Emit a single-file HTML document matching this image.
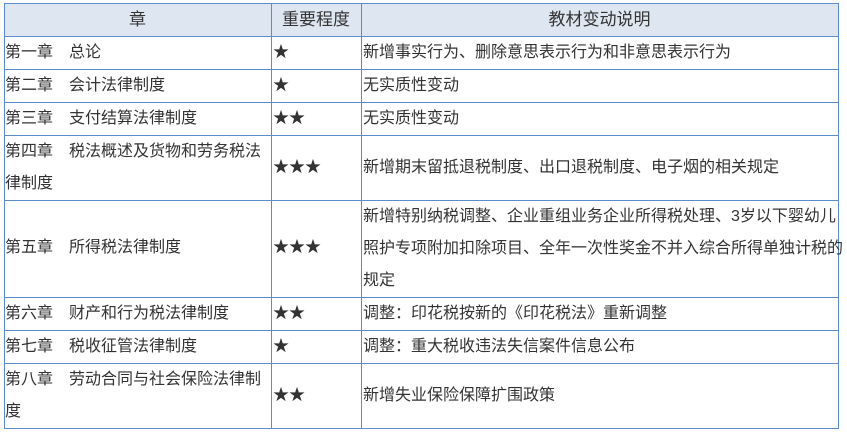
<!DOCTYPE html>
<html><head><meta charset="utf-8"><style>
body{margin:0;width:847px;height:432px;background:#fff;overflow:hidden;font-family:"Liberation Sans","Noto Sans CJK SC",sans-serif;color:#333;font-size:16px}
.h{position:absolute;background:#5b8ccb;height:1px}
.v{position:absolute;background:#5b8ccb;width:1px;top:3px;height:426px}
.t{position:absolute;line-height:32px;white-space:nowrap}
</style></head><body>
<div style="position:absolute;left:4px;top:3px;width:834px;height:33px;background:#dde6f1"></div>
<div class="h" style="left:4px;width:835px;top:3px"></div>
<div class="h" style="left:4px;width:835px;top:36px"></div>
<div class="h" style="left:4px;width:835px;top:69px"></div>
<div class="h" style="left:4px;width:835px;top:102px"></div>
<div class="h" style="left:4px;width:835px;top:135px"></div>
<div class="h" style="left:4px;width:835px;top:200px"></div>
<div class="h" style="left:4px;width:835px;top:297px"></div>
<div class="h" style="left:4px;width:835px;top:330px"></div>
<div class="h" style="left:4px;width:835px;top:363px"></div>
<div class="h" style="left:4px;width:835px;top:428px"></div>
<div class="v" style="left:4px"></div>
<div class="v" style="left:271px"></div>
<div class="v" style="left:361px"></div>
<div class="v" style="left:838px"></div>

<div class="t" style="left:4px;width:267px;top:4px;text-align:center;font-size:17px">章</div>
<div class="t" style="left:271px;width:90px;top:4px;text-align:center;font-size:17px">重要程度</div>
<div class="t" style="left:361px;width:477px;top:4px;text-align:center;font-size:17px">教材变动说明</div>

<div class="t" style="left:5px;top:37px">第一章　总论</div>
<div class="t" style="left:273px;top:37px">★</div>
<div class="t" style="left:363px;top:37px">新增事实行为、删除意思表示行为和非意思表示行为</div>

<div class="t" style="left:5px;top:70px">第二章　会计法律制度</div>
<div class="t" style="left:273px;top:70px">★</div>
<div class="t" style="left:363px;top:70px">无实质性变动</div>

<div class="t" style="left:5px;top:103px">第三章　支付结算法律制度</div>
<div class="t" style="left:273px;top:103px">★★</div>
<div class="t" style="left:363px;top:103px">无实质性变动</div>

<div class="t" style="left:5px;top:136px">第四章　税法概述及货物和劳务税法<br>律制度</div>
<div class="t" style="left:273px;top:152px">★★★</div>
<div class="t" style="left:363px;top:152px">新增期末留抵退税制度、出口退税制度、电子烟的相关规定</div>

<div class="t" style="left:5px;top:232px">第五章　所得税法律制度</div>
<div class="t" style="left:273px;top:232px">★★★</div>
<div class="t" style="left:363px;top:201px">新增特别纳税调整、企业重组业务企业所得税处理、3岁以下婴幼儿<br>照护专项附加扣除项目、全年一次性奖金不并入综合所得单独计税的<br>规定</div>

<div class="t" style="left:5px;top:298px">第六章　财产和行为税法律制度</div>
<div class="t" style="left:273px;top:298px">★★</div>
<div class="t" style="left:363px;top:298px">调整：印花税按新的《印花税法》重新调整</div>

<div class="t" style="left:5px;top:331px">第七章　税收征管法律制度</div>
<div class="t" style="left:273px;top:331px">★</div>
<div class="t" style="left:363px;top:331px">调整：重大税收违法失信案件信息公布</div>

<div class="t" style="left:5px;top:364px">第八章　劳动合同与社会保险法律制<br>度</div>
<div class="t" style="left:273px;top:380px">★★</div>
<div class="t" style="left:363px;top:380px">新增失业保险保障扩围政策</div>
</body></html>
